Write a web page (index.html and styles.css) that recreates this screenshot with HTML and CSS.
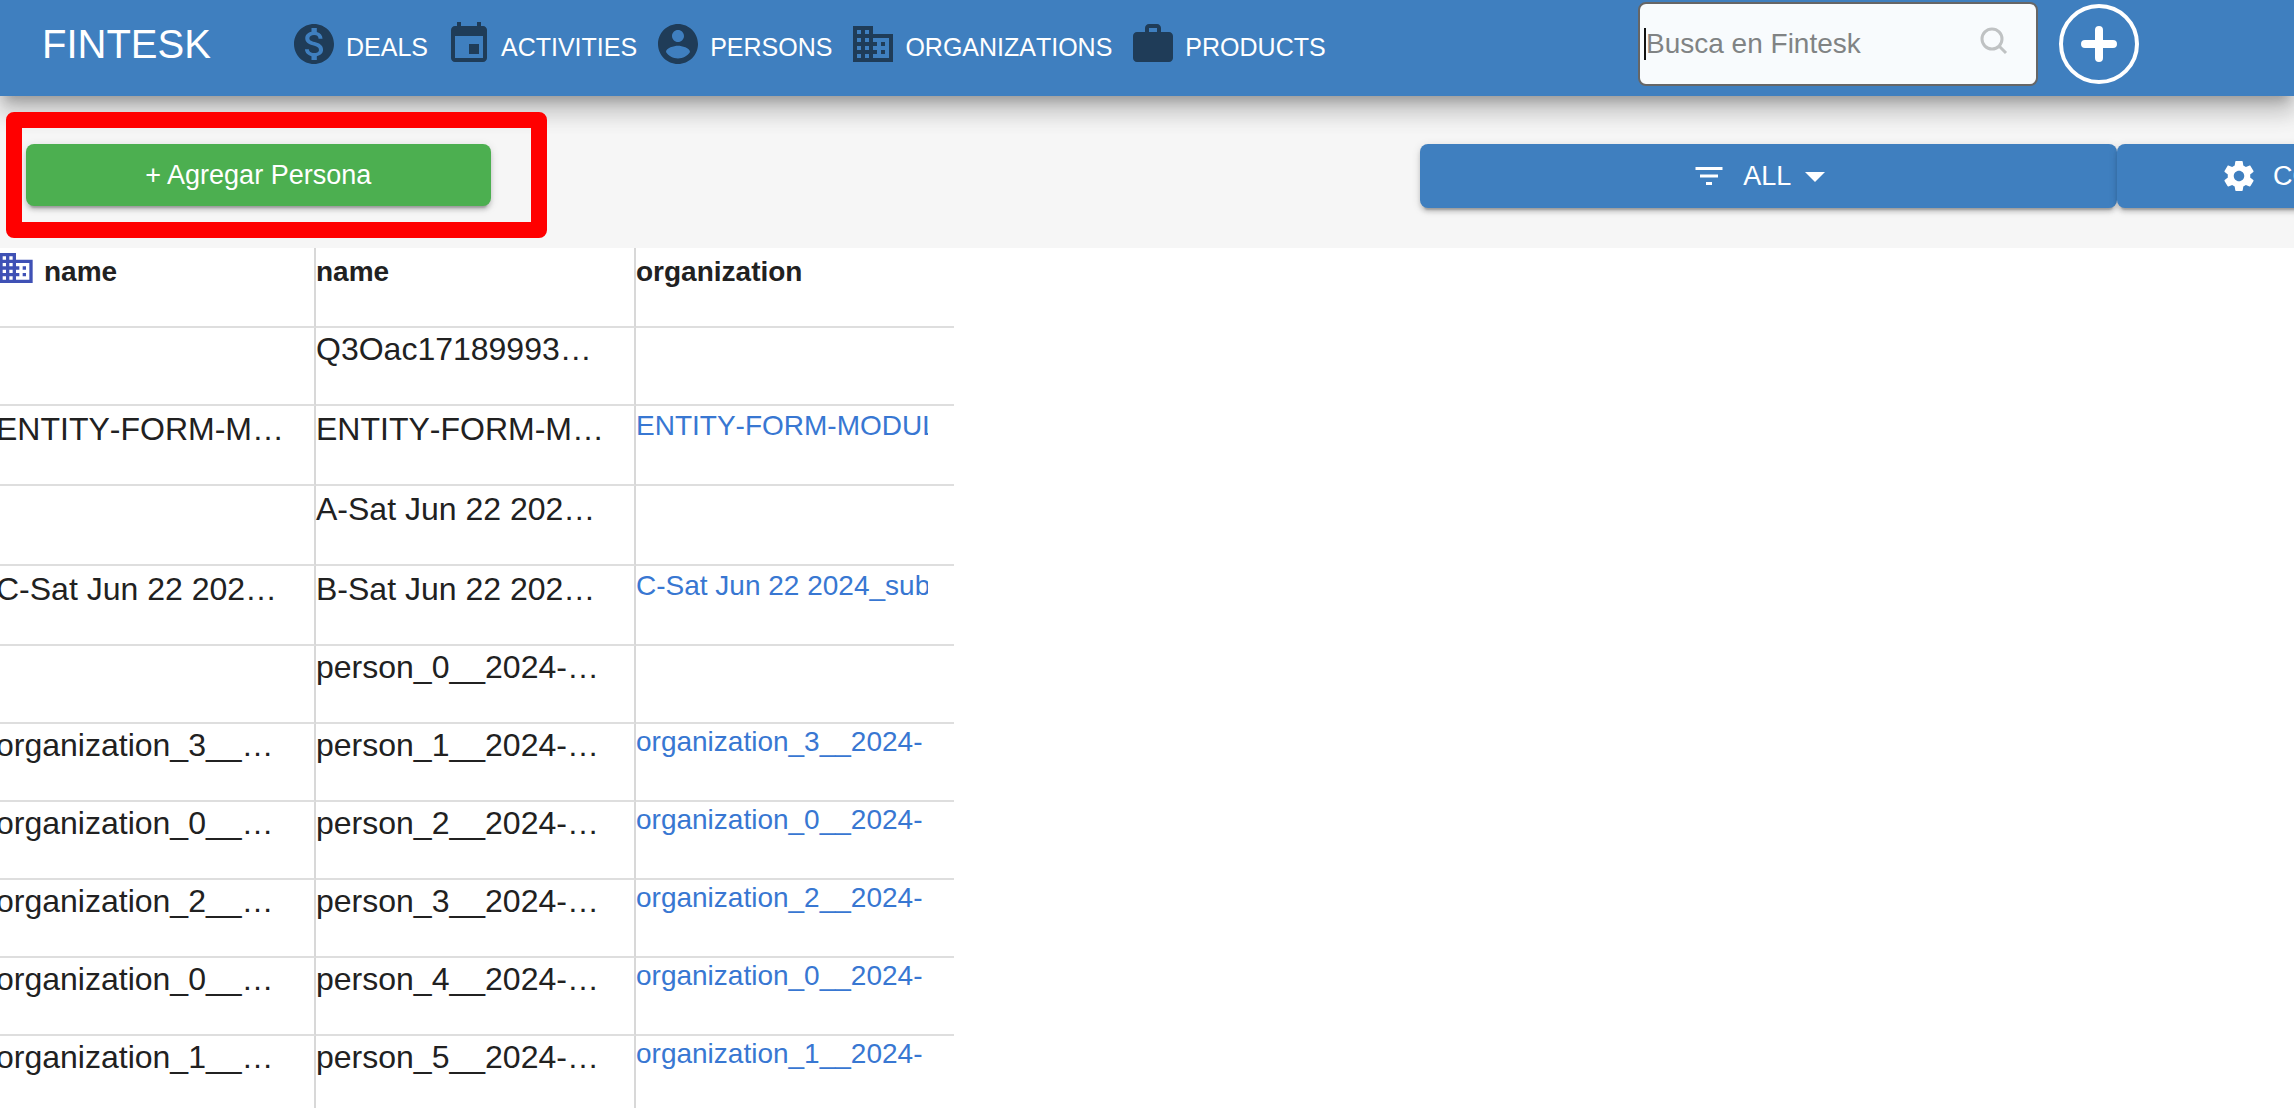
FILE: index.html
```html
<!DOCTYPE html>
<html lang="es">
<head>
<meta charset="utf-8">
<meta name="viewport" content="width=device-width, initial-scale=1">
<title>Fintesk</title>
<link rel="stylesheet" href="styles.css">
</head>
<body>
<svg class="sprite" aria-hidden="true">
  <symbol id="business" viewBox="0 0 24 24"><path d="M12 7V3H2v18h20V7H12zM6 19H4v-2h2v2zm0-4H4v-2h2v2zm0-4H4V9h2v2zm0-4H4V5h2v2zm4 12H8v-2h2v2zm0-4H8v-2h2v2zm0-4H8V9h2v2zm0-4H8V5h2v2zm10 12h-8v-2h2v-2h-2v-2h2v-2h-2V9h8v10zm-2-8h-2v2h2v-2zm0 4h-2v2h2v-2z"/></symbol>
</svg>
<header class="header">
  <div class="brand">FINTESK</div>
  <nav class="nav">
    <a class="nav-link" href="#deals"><svg class="nav-icon" viewBox="0 0 24 24"><path d="M12 2C6.48 2 2 6.48 2 12s4.480 10 10 10 10-4.480 10-10S17.520 2 12 2zm1.410 16.090V20h-2.670v-1.930c-1.710-.36-3.160-1.460-3.270-3.400h1.960c.1 1.050.82 1.870 2.650 1.870 1.960 0 2.400-.98 2.400-1.590 0-.83-.44-1.610-2.670-2.140-2.480-.6-4.180-1.620-4.180-3.670 0-1.720 1.390-2.840 3.110-3.210V4h2.670v1.950c1.860.45 2.790 1.860 2.850 3.390H14.300c-.05-1.110-.64-1.870-2.220-1.870-1.500 0-2.400.68-2.400 1.640 0 .84.65 1.390 2.670 1.910s4.180 1.390 4.180 3.910c-.01 1.830-1.380 2.830-3.120 3.160z"/></svg><span class="nav-text">DEALS</span></a>
    <a class="nav-link" href="#activities"><svg class="nav-icon" viewBox="0 0 24 24"><path d="M17 12h-5v5h5v-5zM16 1v2H8V1H6v2H5c-1.110 0-1.990.9-1.990 2L3 19c0 1.100.89 2 2 2h14c1.100 0 2-.9 2-2V5c0-1.100-.9-2-2-2h-1V1h-2zm3 18H5V8h14v11z"/></svg><span class="nav-text">ACTIVITIES</span></a>
    <a class="nav-link" href="#persons"><svg class="nav-icon" viewBox="0 0 24 24"><path d="M12 2C6.480 2 2 6.480 2 12s4.480 10 10 10 10-4.480 10-10S17.520 2 12 2zm0 3c1.660 0 3 1.340 3 3s-1.340 3-3 3-3-1.340-3-3 1.340-3 3-3zm0 14.200c-2.500 0-4.710-1.280-6-3.220.03-1.990 4-3.080 6-3.080 1.990 0 5.970 1.090 6 3.080-1.290 1.940-3.500 3.220-6 3.220z"/></svg><span class="nav-text">PERSONS</span></a>
    <a class="nav-link" href="#organizations"><svg class="nav-icon"><use href="#business"/></svg><span class="nav-text">ORGANIZATIONS</span></a>
    <a class="nav-link" href="#products"><svg class="nav-icon" viewBox="0 0 24 24"><path d="M20 6h-4V4c0-1.110-.89-2-2-2h-4c-1.110 0-2 .89-2 2v2H4c-1.110 0-2 .89-2 2v11c0 1.110.89 2 2 2h16c1.110 0 2-.89 2-2V8c0-1.110-.89-2-2-2zm-6 0h-4V4h4v2z"/></svg><span class="nav-text">PRODUCTS</span></a>
  </nav>
  <form class="search" role="search">
    <span class="caret"></span>
    <input class="search-input" type="text" placeholder="Busca en Fintesk" aria-label="Busca en Fintesk">
    <svg class="search-icon" viewBox="0 0 28 28"><circle cx="12" cy="12" r="10"/><path d="M19 19l7 7"/></svg>
  </form>
  <button class="add" type="button" aria-label="Agregar"><svg class="add-icon" viewBox="0 0 36 36"><path d="M18 4v28M4 18h28"/></svg></button>
</header>
<main>
  <div class="toolbar">
    <div class="create">
      <button class="button button-create" type="button">+ Agregar Persona</button>
      <span class="highlight"></span>
    </div>
    <div class="actions">
      <button class="button button-filter" type="button"><svg class="button-icon" viewBox="0 0 24 24"><path d="M10 18h4v-2h-4v2zM3 6v2h18V6H3zm3 7h12v-2H6v2z"/></svg><span>ALL</span><svg class="arrow" viewBox="0 0 24 24"><path d="M7 10l5 5 5-5z"/></svg></button>
      <button class="button button-columns" type="button"><svg class="button-icon" viewBox="0 0 24 24"><path d="M19.430 12.980c.04-.32.07-.64.07-.98s-.03-.66-.07-.98l2.110-1.650c.19-.15.24-.42.12-.64l-2-3.460c-.12-.22-.39-.3-.61-.22l-2.490 1c-.52-.4-1.080-.73-1.690-.98l-.38-2.650C14.460 2.180 14.250 2 14 2h-4c-.25 0-.46.18-.49.42l-.38 2.650c-.61.25-1.170.59-1.690.98l-2.490-1c-.23-.09-.49 0-.61.22l-2 3.460c-.13.22-.07.49.12.64l2.110 1.650c-.04.32-.07.65-.07.98s.03.66.07.98l-2.110 1.650c-.19.15-.24.42-.12.64l2 3.460c.12.22.39.3.61.22l2.490-1c.52.4 1.080.73 1.690.98l.38 2.650c.03.24.24.42.49.42h4c.25 0 .46-.18.49-.42l.38-2.650c.61-.25 1.170-.59 1.690-.98l2.490 1c.23.09.49 0 .61-.22l2-3.460c.12-.22.07-.49-.12-.64l-2.110-1.650zM12 15.500c-1.930 0-3.500-1.570-3.500-3.500s1.570-3.500 3.500-3.500 3.500 1.570 3.500 3.500-1.570 3.500-3.500 3.500z"/></svg><span>CO</span></button>
    </div>
  </div>
  <table class="grid">
    <thead>
      <tr class="tall"><th scope="col"><div class="heading"><svg class="heading-icon"><use href="#business"/></svg>name</div></th><th scope="col"><div class="heading">name</div></th><th scope="col"><div class="heading">organization</div></th></tr>
    </thead>
    <tbody>
      <tr><td></td><td>Q3Oac17189993…</td><td></td></tr>
      <tr class="tall"><td>ENTITY-FORM-M…</td><td>ENTITY-FORM-M…</td><td><a class="org" href="#org">ENTITY-FORM-MODUL</a></td></tr>
      <tr class="tall"><td></td><td>A-Sat Jun 22 202…</td><td></td></tr>
      <tr class="tall"><td>C-Sat Jun 22 202…</td><td>B-Sat Jun 22 202…</td><td><a class="org" href="#org">C-Sat Jun 22 2024_sub</a></td></tr>
      <tr><td></td><td>person_0__2024-…</td><td></td></tr>
      <tr><td>organization_3__…</td><td>person_1__2024-…</td><td><a class="org" href="#org">organization_3__2024-</a></td></tr>
      <tr><td>organization_0__…</td><td>person_2__2024-…</td><td><a class="org" href="#org">organization_0__2024-</a></td></tr>
      <tr><td>organization_2__…</td><td>person_3__2024-…</td><td><a class="org" href="#org">organization_2__2024-</a></td></tr>
      <tr><td>organization_0__…</td><td>person_4__2024-…</td><td><a class="org" href="#org">organization_0__2024-</a></td></tr>
      <tr><td>organization_1__…</td><td>person_5__2024-…</td><td><a class="org" href="#org">organization_1__2024-</a></td></tr>
    </tbody>
  </table>
</main>
</body>
</html>
```

FILE: styles.css
```css
* {
  box-sizing: border-box;
}

body {
  height: 100vh;
  margin: 0;
  overflow: hidden;
  background: #fff;
  color: #212121;
  font-family: "Liberation Sans", Arial, sans-serif;
  font-kerning: none;
}

.sprite {
  display: none;
}

/* Header */

.header {
  position: relative;
  display: flex;
  align-items: center;
  height: 96px;
  padding: 0 155px 8px 42px;
  background: #3f7fbf;
  box-shadow:
    0 10px 10px -6px rgba(0, 0, 0, 0.2),
    0 16px 20px 2px rgba(0, 0, 0, 0.14),
    0 6px 28px 4px rgba(0, 0, 0, 0.12);
}

.brand {
  width: 248px;
  color: #fff;
  font-size: 40px;
  line-height: 48px;
}

.nav {
  display: flex;
  gap: 17px;
  margin-right: auto;
}

.nav-link {
  display: flex;
  align-items: flex-end;
  gap: 8px;
  color: #fff;
  text-decoration: none;
}

.nav-icon {
  width: 48px;
  height: 48px;
  fill: #1f3c58;
}

.nav-text {
  font-size: 25px;
  line-height: 42px;
}

.search {
  display: flex;
  align-items: center;
  width: 400px;
  height: 84px;
  padding: 0 28px 0 4px;
  border: 2px solid #666;
  border-radius: 8px;
  background: #f8fbfd;
}

.caret {
  width: 2px;
  height: 32px;
  background: #111;
}

.search-input {
  flex: 1;
  min-width: 0;
  padding: 0;
  border: 0;
  background: none;
  color: #212121;
  font: 28px/32px "Liberation Sans", Arial, sans-serif;
  outline: none;
}

.search-input::placeholder {
  color: #808384;
  opacity: 1;
}

.search-icon {
  width: 28px;
  height: 28px;
  margin-bottom: 6px;
  fill: none;
  stroke: #bfc2c3;
  stroke-width: 3;
}

.add {
  display: flex;
  align-items: center;
  justify-content: center;
  width: 80px;
  height: 80px;
  margin-left: 21px;
  padding: 0;
  border: 4px solid #fff;
  border-radius: 50%;
  background: none;
}

.add-icon {
  width: 36px;
  height: 36px;
  fill: none;
  stroke: #fff;
  stroke-width: 8;
  stroke-linecap: round;
}

/* Toolbar */

.toolbar {
  display: grid;
  grid-template-columns: minmax(0, 51fr) minmax(0, 32fr);
  align-items: start;
  height: 152px;
  padding: 48px 0 0 26px;
  overflow: hidden;
  background: #f6f6f6;
}

.create {
  position: relative;
  width: calc(100% / 3);
  min-width: 280px;
}

.highlight {
  position: absolute;
  inset: -32px -56px -32px -20px;
  border: 16px solid #f00;
  border-radius: 8px;
  pointer-events: none;
}

.actions {
  position: relative;
  display: grid;
  grid-template-columns: minmax(0, 63fr) minmax(0, 16fr);
}

.button {
  display: flex;
  align-items: center;
  justify-content: center;
  height: 64px;
  padding: 0;
  border: 0;
  border-radius: 8px;
  background: #3f7fbf;
  box-shadow:
    0 6px 2px -4px rgba(0, 0, 0, 0.2),
    0 4px 4px rgba(0, 0, 0, 0.14),
    0 2px 10px rgba(0, 0, 0, 0.12);
  color: #fff;
  font: 27px/32px "Liberation Sans", Arial, sans-serif;
}

.button-create {
  width: 100%;
  height: 62px;
  background: #4caf50;
}

.button-filter {
  padding-right: 6px;
}

.button-columns {
  justify-content: flex-start;
  min-width: 697px;
  padding-left: 104px;
}

.button-icon {
  width: 36px;
  height: 36px;
  margin-right: 16px;
  fill: #fff;
}

.arrow {
  width: 48px;
  height: 48px;
  fill: #fff;
}

/* Persons table */

.grid {
  width: 958px;
  margin-left: -4px;
  border-spacing: 0;
  table-layout: fixed;
}

.grid th,
.grid td {
  width: 320px;
  height: 78px;
  padding: 0;
  border-right: 2px solid #d8d8d8;
  border-bottom: 2px solid #dedede;
  font-size: 32px;
  line-height: 42px;
  text-align: left;
  vertical-align: top;
  white-space: nowrap;
}

.grid th:last-child,
.grid td:last-child {
  width: 318px;
  border-right: 0;
}

.grid .tall th {
  height: 80px;
}

.grid .tall td {
  height: 80px;
  padding-top: 2px;
}

.heading {
  display: flex;
  gap: 8px;
  font-size: 28px;
  line-height: 48px;
}

.heading-icon {
  width: 40px;
  height: 40px;
  fill: #3f51b5;
}

.org {
  display: block;
  width: 292px;
  overflow: hidden;
  color: #3877d2;
  font-size: 28px;
  line-height: 36px;
  text-decoration: none;
}
```
